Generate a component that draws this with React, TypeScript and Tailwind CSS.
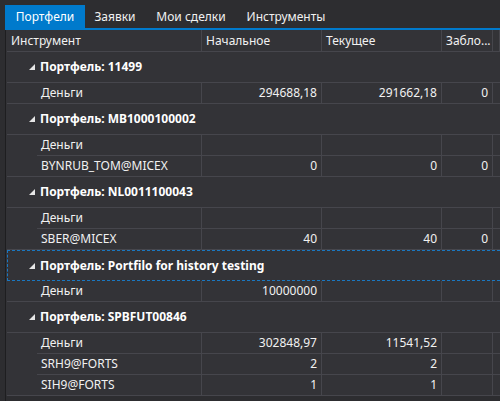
import React from "react";

type Row = { name: string; a?: string; b?: string; c?: string };
type Group = { title: string; rows: Row[]; focused?: boolean };

const groups: Group[] = [
  { title: "Портфель: 11499", rows: [{ name: "Деньги", a: "294688,18", b: "291662,18", c: "0" }] },
  {
    title: "Портфель: MB1000100002",
    rows: [
      { name: "Деньги" },
      { name: "BYNRUB_TOM@MICEX", a: "0", b: "0", c: "0" },
    ],
  },
  {
    title: "Портфель: NL0011100043",
    rows: [
      { name: "Деньги" },
      { name: "SBER@MICEX", a: "40", b: "40", c: "0" },
    ],
  },
  {
    title: "Портфель: Portfilo for history testing",
    focused: true,
    rows: [{ name: "Деньги", a: "10000000" }],
  },
  {
    title: "Портфель: SPBFUT00846",
    rows: [
      { name: "Деньги", a: "302848,97", b: "11541,52" },
      { name: "SRH9@FORTS", a: "2", b: "2" },
      { name: "SIH9@FORTS", a: "1", b: "1" },
    ],
  },
];

const Arrow = () => (
  <svg width="6" height="6" viewBox="0 0 6 6" className="shrink-0">
    <polygon points="6,0 6,6 0,6" fill="#e6e6e6" />
  </svg>
);

export default function App() {
  const font = { fontFamily: '"Noto Sans", "Open Sans", sans-serif' };
  return (
    <div
      className="w-[500px] h-[401px] bg-[#2d2d30] overflow-hidden text-[12px] text-[#f1f1f1] flex flex-col"
      style={font}
    >
      {/* tabs */}
      <div className="h-[28px] pl-[5px] pt-[5px] flex items-stretch shrink-0">
        <div className="w-[80px] bg-[#007acc] text-white flex items-center justify-center text-[12px]">Портфели</div>
        <div className="w-[60px] flex items-center justify-center text-[12px]">Заявки</div>
        <div className="w-[92px] flex items-center justify-center text-[12px]">Мои сделки</div>
        <div className="w-[98px] flex items-center justify-center text-[12px]">Инструменты</div>
      </div>
      <div className="h-[2px] ml-[5px] bg-[#007acc] shrink-0" />
      {/* grid */}
      <div className="flex-1 ml-[5px] border-l border-[#1e1e20] flex flex-col bg-[#333337] min-h-0">
        <div className="ml-[1px] flex flex-col">
          {/* header */}
          <div className="h-[22px] flex border-b border-[#46464c] shrink-0">
            <div className="w-[195px] border-r border-[#46464c] pl-[4px] flex items-center">Инструмент</div>
            <div className="w-[120px] border-r border-[#46464c] pl-[4px] flex items-center">Начальное</div>
            <div className="w-[120px] border-r border-[#46464c] pl-[4px] flex items-center">Текущее</div>
            <div className="w-[51px] border-r border-[#46464c] pl-[4px] flex items-center whitespace-nowrap overflow-hidden">Забло...</div>
            <div className="flex-1 border-r border-[#46464c]" />
          </div>
          {groups.map((g, gi) => (
            <div key={gi} className="flex flex-col">
              <div
                className={
                  g.focused
                    ? "h-[31px] flex items-center border-y border-l border-dashed border-[#1a78c2] shrink-0"
                    : "h-[31px] flex items-center border-b border-[#46464c] shrink-0"
                }
              >
                <div className={g.focused ? "w-[21px]" : "w-[22px]"} />
                <Arrow />
                <div className="ml-[5px] font-bold text-white whitespace-nowrap">{g.title}</div>
              </div>
              {g.rows.map((r, ri) => {
                const last = ri === g.rows.length - 1;
                return (
                  <div key={ri} className="h-[21px] flex shrink-0">
                    <div className={last ? "w-[30px] border-b border-[#46464c]" : "w-[30px]"} />
                    <div className="flex-1 flex border-b border-[#46464c]">
                      <div className="w-[165px] border-r border-[#46464c] pl-[4px] flex items-center whitespace-nowrap">{r.name}</div>
                      <div className="w-[120px] border-r border-[#46464c] pr-[4px] flex items-center justify-end">{r.a}</div>
                      <div className="w-[120px] border-r border-[#46464c] pr-[4px] flex items-center justify-end">{r.b}</div>
                      <div className="w-[51px] border-r border-[#46464c] pr-[4px] flex items-center justify-end">{r.c}</div>
                      <div className="flex-1" />
                    </div>
                  </div>
                );
              })}
            </div>
          ))}
        </div>
        <div className="flex-1 bg-[#2d2d30]" />
      </div>
    </div>
  );
}
